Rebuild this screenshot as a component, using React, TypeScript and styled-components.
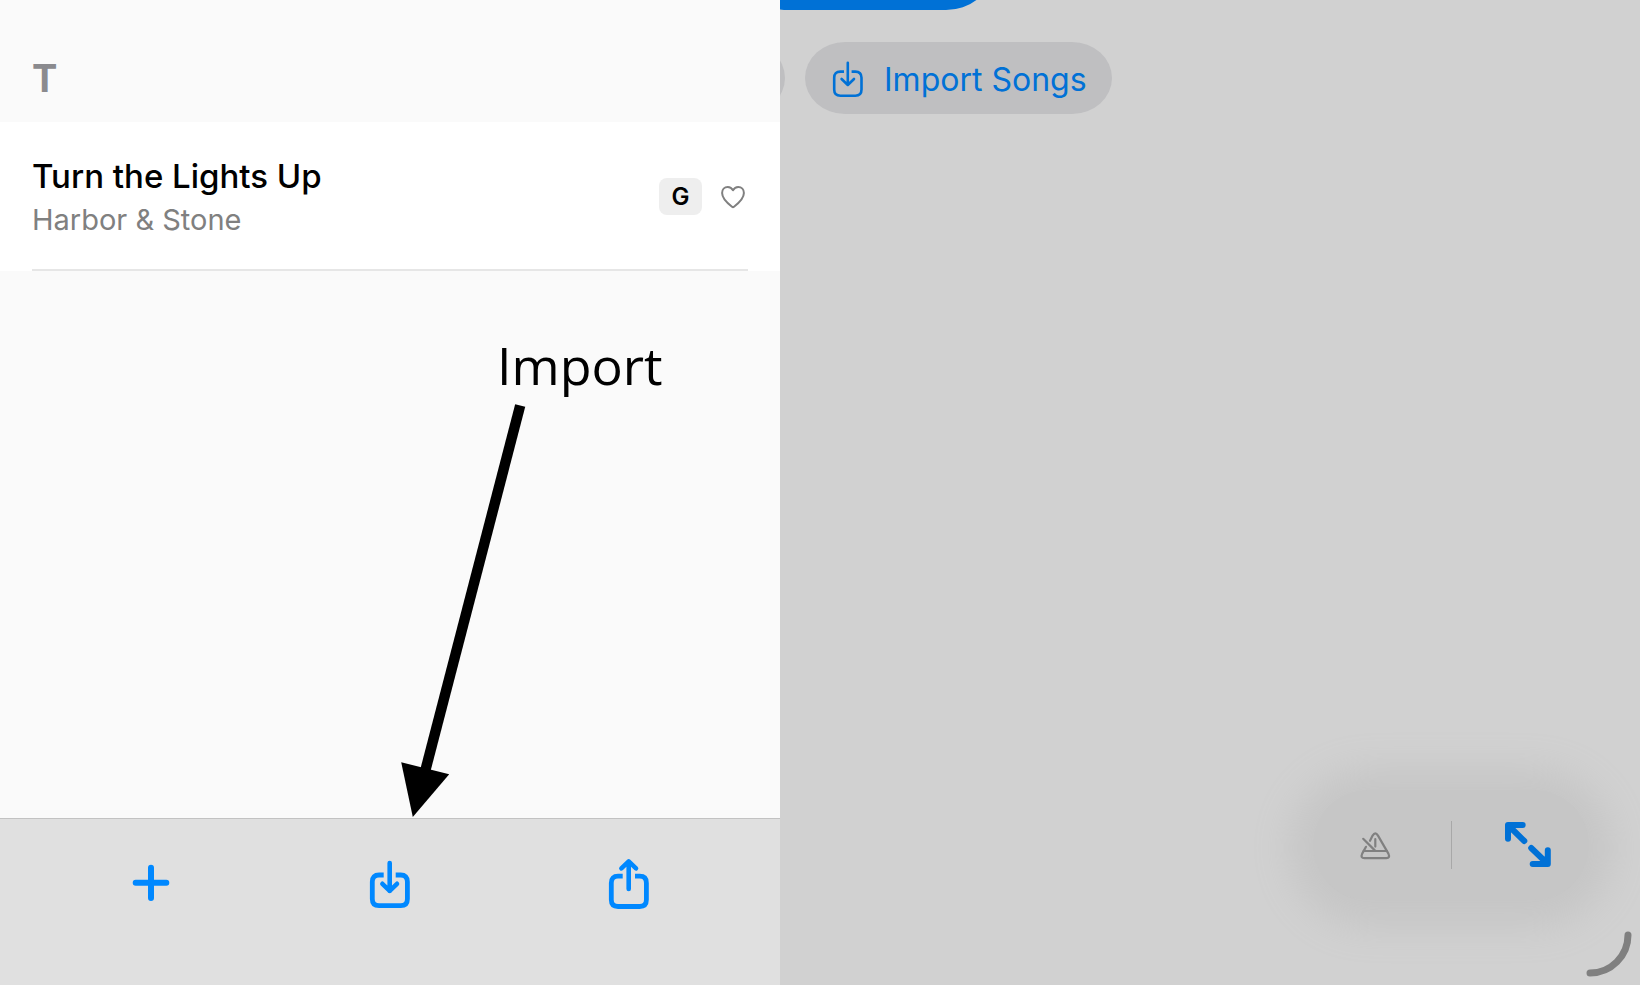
import React from "react";
import styled, { createGlobalStyle } from "styled-components";

const GlobalStyle = createGlobalStyle`
  *, *::before, *::after { box-sizing: border-box; }
  body { margin: 0; font-family: Inter, "Liberation Sans", sans-serif; color: #000; }
  h2, h3, p, ul { margin: 0; padding: 0; }
  button { font: inherit; border: 0; padding: 0; background: none; cursor: pointer; }
  svg { display: block; flex: none; }
`;

const accent = "#0088ff";
const dimmedAccent = "#0071d6";

const Page = styled.div`
  display: grid;
  grid-template-columns: minmax(0, 39fr) minmax(0, 43fr);
  min-height: 100vh;
`;

const Sidebar = styled.aside`
  display: flex;
  flex-direction: column;
  background: #fafafa;
`;

const SectionHeader = styled.h2`
  padding: 56px 32px 22px;
  font-size: 38px;
  line-height: 44px;
  font-weight: 700;
  color: #8a8a8e;
`;

const SongList = styled.ul`
  list-style: none;
`;

const SongRow = styled.li`
  padding: 0 32px;
  background: #fff;
`;

const SongBody = styled.div`
  display: flex;
  align-items: center;
  height: 149px;
  padding-top: 2px;
  padding-right: 2px;
  border-bottom: 2px solid #e6e6e6;
`;

const SongText = styled.div`
  flex: 1;
  min-width: 0;
  padding-top: 2px;
`;

const SongTitle = styled.h3`
  font-size: 33px;
  line-height: 44px;
  font-weight: 500;
`;

const SongArtist = styled.p`
  font-size: 29px;
  line-height: 44px;
  color: #808080;
`;

const KeyBadge = styled.span`
  width: 43px;
  margin-right: 18px;
  border-radius: 8px;
  background: #eee;
  font-size: 24px;
  line-height: 37px;
  font-weight: 600;
  text-align: center;
`;

const IconButton = styled.button<{ $color: string }>`
  display: flex;
  justify-content: center;
  align-items: center;
  color: ${(p) => p.$color};
`;

const Callout = styled.div`
  display: flex;
  flex-direction: column;
  margin-top: auto;
  margin-left: 50%;
`;

const CalloutLabel = styled.p`
  padding-left: 107px;
  font-family: "Open Sans", sans-serif;
  font-size: 52px;
  font-weight: 500;
  line-height: 70px;
`;

const Toolbar = styled.nav`
  display: grid;
  grid-template-columns: repeat(3, 1fr);
  padding: 38px 32px 72px;
  border-top: 1px solid #c2c2c2;
  background: #e0e0e0;
`;

const Detail = styled.main`
  position: relative;
  display: flex;
  flex-direction: column;
  overflow: hidden;
  background: #d1d1d1;
`;

const TabStrip = styled.div`
  display: flex;
  align-items: flex-end;
  height: 10px;
  margin-bottom: 32px;
  overflow: hidden;
`;

const ActiveTab = styled.button`
  flex: none;
  width: 246px;
  height: 72px;
  margin-left: -36px;
  border-radius: 44px / 36px;
  background: ${dimmedAccent};
`;

const ChipRow = styled.div`
  display: flex;
  gap: 20px;
`;

const Chip = styled.button<{ $clipped?: boolean }>`
  display: flex;
  align-items: center;
  gap: 17px;
  height: 72px;
  min-width: 80px;
  margin-left: ${(p) => (p.$clipped ? "-75px" : "0")};
  padding: 4px 25px 0 26px;
  border-radius: 40px / 36px;
  background: #bfbfc1;
  color: ${dimmedAccent};
  font-size: 32px;
  line-height: 44px;
  white-space: nowrap;
`;

const FloatingBar = styled.div`
  display: flex;
  align-items: center;
  align-self: flex-end;
  justify-content: center;
  gap: 52px;
  width: 276px;
  height: 110px;
  margin: auto 51px 85px auto;
  border-radius: 55px;
  background: #c6c6c6;
  box-shadow: 0 3px 36px 24px #c6c6c6;

  ${IconButton} { width: 48px; }
`;

const Divider = styled.span`
  width: 1px;
  height: 48px;
  background: #a8a8a8;
`;

const CornerHandle = styled.svg`
  position: absolute;
  right: 8px;
  bottom: 8px;
`;

const HeartIcon = () => (
  <svg width="26" height="24" viewBox="0 0 26 24" fill="none" stroke="currentColor" strokeWidth="2" strokeLinejoin="round">
    <path d="M13 5.2C11.8 3 10 1.9 7.8 1.9C4.4 1.9 2.1 4.5 2.1 8C2.1 13.2 6.6 17.6 12 21.7Q13 22.5 14 21.7C19.4 17.6 23.9 13.2 23.9 8C23.9 4.5 21.6 1.9 18.2 1.9C16 1.9 14.2 3 13 5.2Z" />
  </svg>
);

const PlusIcon = () => (
  <svg width="48" height="56" viewBox="0 0 48 56" fill="none" stroke="currentColor" strokeWidth="6" strokeLinecap="round">
    <path d="M24 10.7V41M8.7 25.8H39.3" />
  </svg>
);

const ImportIcon = () => (
  <svg width="48" height="56" viewBox="0 0 48 56" fill="none" stroke="currentColor">
    <path strokeWidth="4.8" d="M17.7 18H13Q6.3 18 6.3 24.7V42Q6.3 48.7 13 48.7H34.7Q41.4 48.7 41.4 42V24.7Q41.4 18 34.7 18H29.7" />
    <path strokeWidth="4.6" strokeLinecap="round" strokeLinejoin="round" d="M23.7 6V34M16.4 26.8L23.7 33.8L31 26.8" />
  </svg>
);

const ShareIcon = () => (
  <svg width="48" height="56" viewBox="0 0 48 56" fill="none" stroke="currentColor">
    <path strokeWidth="4.8" d="M17.7 19.2H13Q6.3 19.2 6.3 25.9V42.8Q6.3 49.5 13 49.5H34.7Q41.4 49.5 41.4 42.8V25.9Q41.4 19.2 34.7 19.2H30" />
    <path strokeWidth="4.6" strokeLinecap="round" strokeLinejoin="round" d="M23.7 32V4.6M16.4 11.4L23.7 4.4L31 11.4" />
  </svg>
);

const ChipImportIcon = () => (
  <svg width="36" height="40" viewBox="-1 0 36 40" fill="none" stroke="currentColor" strokeWidth="2.6">
    <path d="M12 11.6H8.4Q2.2 11.6 2.2 17.8V29.6Q2.2 35.8 8.4 35.8H23.3Q29.5 35.8 29.5 29.6V17.8Q29.5 11.6 23.3 11.6H19.6" />
    <path strokeLinecap="round" strokeLinejoin="round" d="M15.8 2.7V24.8M9.6 19L15.8 25L22 19" />
  </svg>
);

const MetronomeOffIcon = () => (
  <svg width="32" height="32" viewBox="0 -1 32 32" fill="none" stroke="currentColor" strokeWidth="2.2" strokeLinecap="round" strokeLinejoin="round">
    <path d="M11 10.8L13.6 5.6Q16.3 1.2 19 5.6L29.4 23.6Q31.4 28.1 27.4 28.1H5.4Q1.2 28.1 3.2 23.6L7 16.8" />
    <path d="M4.6 21H28M4.2 8.8L15.8 20.4M16.3 9.2V16.6" />
  </svg>
);

const ExpandIcon = () => (
  <svg width="48" height="48" viewBox="0 0 48 48" fill="none" stroke="currentColor" strokeWidth="6" strokeLinecap="round" strokeLinejoin="round">
    <path d="M18.7 3.9H4V17.7M5 5L20.3 20M28.7 43.1H43.8V29.2M42.8 42L27.2 27" />
    <path fill="currentColor" strokeWidth="2" d="M4 3.9H13L4 13ZM43.8 43.1V34L34.8 43.1Z" />
  </svg>
);

const CalloutArrow = () => (
  <svg width="150" height="418" viewBox="390 400 150 418">
    <path d="M520.2 405.5L425.2 771" stroke="#000" strokeWidth="10.4" />
    <path d="M401.2 762.2L449.2 774.3L412.8 817Z" />
  </svg>
);

export default function App() {
  return (
    <Page>
      <GlobalStyle />
      <Sidebar>
        <SectionHeader>T</SectionHeader>
        <SongList>
          <SongRow>
            <SongBody>
              <SongText>
                <SongTitle>Turn the Lights Up</SongTitle>
                <SongArtist>Harbor &amp; Stone</SongArtist>
              </SongText>
              <KeyBadge>G</KeyBadge>
              <IconButton $color="#808080" aria-label="Favorite">
                <HeartIcon />
              </IconButton>
            </SongBody>
          </SongRow>
        </SongList>
        <Callout>
          <CalloutLabel>Import</CalloutLabel>
          <CalloutArrow />
        </Callout>
        <Toolbar>
          <IconButton $color={accent} aria-label="Add"><PlusIcon /></IconButton>
          <IconButton $color={accent} aria-label="Import"><ImportIcon /></IconButton>
          <IconButton $color={accent} aria-label="Share"><ShareIcon /></IconButton>
        </Toolbar>
      </Sidebar>
      <Detail>
        <TabStrip>
          <ActiveTab aria-label="Songs" />
        </TabStrip>
        <ChipRow>
          <Chip $clipped aria-label="Previous action" />
          <Chip>
            <ChipImportIcon />
            Import Songs
          </Chip>
        </ChipRow>
        <FloatingBar>
          <IconButton $color="#808080" aria-label="Metronome off"><MetronomeOffIcon /></IconButton>
          <Divider />
          <IconButton $color={dimmedAccent} aria-label="Full screen"><ExpandIcon /></IconButton>
        </FloatingBar>
        <CornerHandle width="46" height="46" viewBox="0 0 46 46" fill="none" stroke="#808080" strokeWidth="7" strokeLinecap="round">
          <path d="M4 42A38 38 0 0 0 42 4" />
        </CornerHandle>
      </Detail>
    </Page>
  );
}
